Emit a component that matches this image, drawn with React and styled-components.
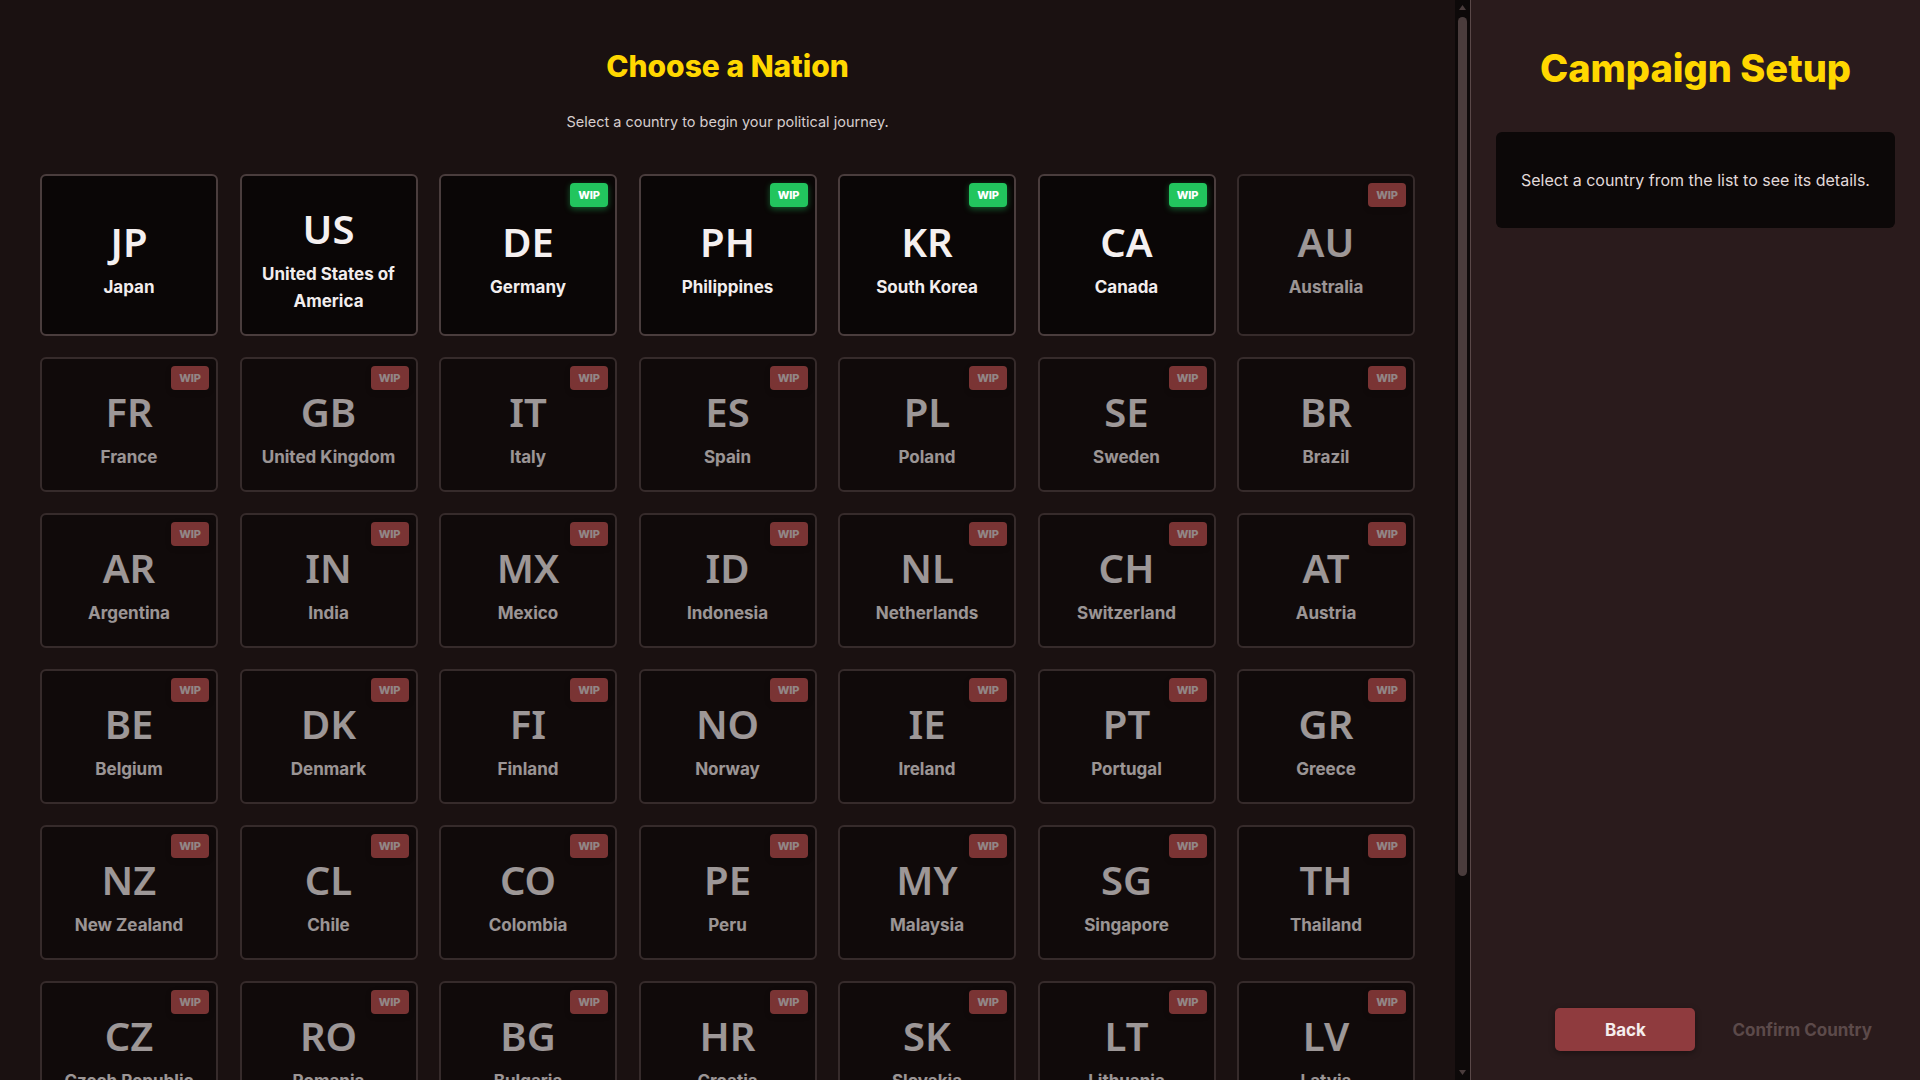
import React from "react";
import styled, { createGlobalStyle } from "styled-components";

const GlobalStyle = createGlobalStyle`
  html, body {
    margin: 0;
    padding: 0;
    background: #1a1111;
    font-family: "Inter", "Liberation Sans", sans-serif;
  }
  * { box-sizing: border-box; }
`;

const countries = [
    { code: "JP", name: "Japan", status: "ready" },
    { code: "US", name: "United States of America", status: "ready" },
    { code: "DE", name: "Germany", status: "beta" },
    { code: "PH", name: "Philippines", status: "beta" },
    { code: "KR", name: "South Korea", status: "beta" },
    { code: "CA", name: "Canada", status: "beta" },
    { code: "AU", name: "Australia" },
    { code: "FR", name: "France" },
    { code: "GB", name: "United Kingdom" },
    { code: "IT", name: "Italy" },
    { code: "ES", name: "Spain" },
    { code: "PL", name: "Poland" },
    { code: "SE", name: "Sweden" },
    { code: "BR", name: "Brazil" },
    { code: "AR", name: "Argentina" },
    { code: "IN", name: "India" },
    { code: "MX", name: "Mexico" },
    { code: "ID", name: "Indonesia" },
    { code: "NL", name: "Netherlands" },
    { code: "CH", name: "Switzerland" },
    { code: "AT", name: "Austria" },
    { code: "BE", name: "Belgium" },
    { code: "DK", name: "Denmark" },
    { code: "FI", name: "Finland" },
    { code: "NO", name: "Norway" },
    { code: "IE", name: "Ireland" },
    { code: "PT", name: "Portugal" },
    { code: "GR", name: "Greece" },
    { code: "NZ", name: "New Zealand" },
    { code: "CL", name: "Chile" },
    { code: "CO", name: "Colombia" },
    { code: "PE", name: "Peru" },
    { code: "MY", name: "Malaysia" },
    { code: "SG", name: "Singapore" },
    { code: "TH", name: "Thailand" },
    { code: "CZ", name: "Czech Republic" },
    { code: "RO", name: "Romania" },
    { code: "BG", name: "Bulgaria" },
    { code: "HR", name: "Croatia" },
    { code: "SK", name: "Slovakia" },
    { code: "LT", name: "Lithuania" },
    { code: "LV", name: "Latvia" },
    { code: "EE", name: "Estonia" },
    { code: "SI", name: "Slovenia" },
    { code: "HU", name: "Hungary" },
    { code: "TR", name: "Turkey" },
    { code: "ZA", name: "South Africa" },
    { code: "EG", name: "Egypt" },
    { code: "VN", name: "Vietnam" },
];

const Layout = styled.div`
  display: flex;
  height: 100vh;
  overflow: hidden;
`;

const NationPanel = styled.main`
  flex: 1;
  overflow-y: auto;
  padding: 48px 40px 40px;
  background: #1a1111;
  scrollbar-width: none;
  &::-webkit-scrollbar { display: none; }
`;

// the scroll rail next to the list (headless shows no native bar)
const ScrollRail = styled.div`
  width: 15px;
  flex-shrink: 0;
  display: flex;
  flex-direction: column;
  align-items: center;
  background: #0d0909;
`;

const RailArrow = styled.div`
  height: 15px;
  display: flex;
  align-items: center;
  justify-content: center;
  color: #4a3c3c;
`;

const Thumb = styled.div`
  width: 9px;
  height: 859px;
  margin-top: 2px;
  border-radius: 5px;
  background: #4a3c3c;
`;

const RailFill = styled.div`
  flex: 1;
`;

const Title = styled.h1`
  margin: 0;
  text-align: center;
  color: #ffd700;
  font-size: 30px;
  line-height: 36px;
  font-weight: 800;
`;

const Subtitle = styled.p`
  margin: 28px 0 42px;
  text-align: center;
  color: #d6cdcd;
  font-size: 14.5px;
  line-height: 20px;
`;

const Grid = styled.div`
  display: grid;
  grid-template-columns: repeat(7, 1fr);
  gap: 21.5px;
`;

const Card = styled.div`
  position: relative;
  display: flex;
  flex-direction: column;
  align-items: center;
  justify-content: center;
  padding: 28.5px 12px 19px;
  background: #0a0606;
  border: 2px solid #4a3d3d;
  border-radius: 6px;
  text-align: center;
  cursor: pointer;
  opacity: ${(p) => (p.$disabled ? 0.6 : 1)};
`;

const Code = styled.div`
  font-family: "Noto Sans", "Open Sans", sans-serif;
  font-size: 40px;
  line-height: 48px;
  font-weight: 600;
  color: #f5f0f0;
`;

const Name = styled.div`
  margin-top: 8px;
  font-size: 17px;
  line-height: 27px;
  font-weight: 700;
  color: #f2eded;
`;

const Badge = styled.span`
  position: absolute;
  top: 7px;
  right: 7px;
  width: 38px;
  height: 24px;
  display: flex;
  align-items: center;
  justify-content: center;
  border-radius: 4px;
  font-size: 11px;
  font-weight: 800;
  letter-spacing: -0.2px;
  color: ${(p) => (p.$green ? "#ffffff" : "#e2d4d4")};
  background: ${(p) => (p.$green ? "#22c55e" : "#bb4c4c")};
  box-shadow: ${(p) =>
    p.$green ? "0 2px 6px rgba(34, 197, 94, 0.45)" : "0 2px 5px rgba(0, 0, 0, 0.4)"};
`;

const SetupPanel = styled.aside`
  width: 450px;
  flex-shrink: 0;
  display: flex;
  flex-direction: column;
  padding: 45px 25px 29px;
  background: #2a1b1c;
  border-left: 1px solid #5a4848;
`;

const SetupTitle = styled.h2`
  margin: 0;
  text-align: center;
  color: #ffd700;
  font-size: 38px;
  line-height: 46px;
  font-weight: 800;
`;

const InfoBox = styled.div`
  margin-top: 41px;
  padding: 36px 16px;
  background: #0c0808;
  border-radius: 6px;
  text-align: center;
  color: #e2dada;
  font-size: 16px;
  line-height: 24px;
`;

const Spacer = styled.div`
  flex: 1;
`;

const Actions = styled.div`
  display: flex;
  justify-content: flex-end;
  align-items: center;
  gap: 14px;
`;

const Button = styled.button`
  height: 43px;
  border: none;
  border-radius: 5px;
  font-family: inherit;
  font-size: 17px;
  font-weight: 700;
  cursor: pointer;
  width: ${(p) => (p.$primary ? "140px" : "auto")};
  padding: ${(p) => (p.$primary ? "0" : "0 23px")};
  background: ${(p) => (p.$primary ? "#8f3b3e" : "transparent")};
  color: ${(p) => (p.$primary ? "#f5eded" : "#5c4a4a")};
  box-shadow: ${(p) => (p.$primary ? "0 2px 6px rgba(0, 0, 0, 0.35)" : "none")};
`;

const Triangle = ({ down }) => (
    <svg width="7" height="5" viewBox="0 0 7 5">
        <path d={down ? "M0 0 L7 0 L3.5 5 Z" : "M0 5 L7 5 L3.5 0 Z"} fill="currentColor" />
    </svg>
);

const App = () => {
    return (
        <Layout>
            <GlobalStyle />
            <NationPanel>
                <Title>Choose a Nation</Title>
                <Subtitle>Select a country to begin your political journey.</Subtitle>
                <Grid>
                    {countries.map((c) => (
                        <Card key={c.code} $disabled={!c.status}>
                            {c.status !== "ready" && <Badge $green={c.status === "beta"}>WIP</Badge>}
                            <Code>{c.code}</Code>
                            <Name>{c.name}</Name>
                        </Card>
                    ))}
                </Grid>
            </NationPanel>

            <ScrollRail>
                <RailArrow><Triangle /></RailArrow>
                <Thumb />
                <RailFill />
                <RailArrow><Triangle down /></RailArrow>
            </ScrollRail>

            <SetupPanel>
                <SetupTitle>Campaign Setup</SetupTitle>
                <InfoBox>Select a country from the list to see its details.</InfoBox>
                <Spacer />
                <Actions>
                    <Button $primary>Back</Button>
                    <Button disabled>Confirm Country</Button>
                </Actions>
            </SetupPanel>
        </Layout>
    );
};

export default App;
